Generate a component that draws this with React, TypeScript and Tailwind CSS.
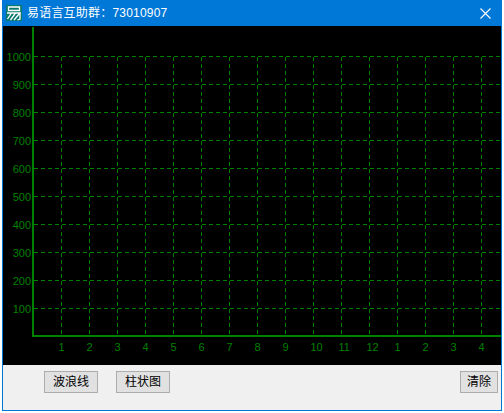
const FONT = "font-['Liberation_Sans','Noto_Sans_CJK_SC',sans-serif]";

const yValues = [1000, 900, 800, 700, 600, 500, 400, 300, 200, 100];
const xLabels = [1, 2, 3, 4, 5, 6, 7, 8, 9, 10, 11, 12, 1, 2, 3, 4];

function Chart() {
  return (
    <svg width={498} height={339} className="block" shapeRendering="crispEdges">
      {yValues.map((v, i) => {
        const y = 30.5 + i * 28;
        return (
          <g key={v}>
            <line x1={31} x2={498} y1={y} y2={y} stroke="#008000" strokeDasharray="4 3" />
            <text x={28} y={y + 4} textAnchor="end" fill="#008000" fontSize={11} fontFamily="Liberation Sans">
              {v}
            </text>
          </g>
        );
      })}
      {xLabels.map((v, i) => {
        const x = 58.5 + i * 28;
        return (
          <g key={i}>
            <line x1={x} x2={x} y1={31} y2={309} stroke="#008000" strokeDasharray="4 3" />
            {/* labels start at the tick, so 10-12 lean right */}
            <text x={x - 3} y={325} fill="#008000" fontSize={11} fontFamily="Liberation Sans">
              {v}
            </text>
          </g>
        );
      })}
      <rect x={29} y={1} width={2} height={310} fill="#008000" />
      <rect x={29} y={309} width={469} height={2} fill="#008000" />
    </svg>
  );
}

function Btn({ label, className }: { label: string; className: string }) {
  return (
    <button className={`h-[22px] bg-[#e1e1e1] border border-[#adadad] text-[12px] leading-none text-black ${className}`}>
      {label}
    </button>
  );
}

function Logo() {
  return (
    <svg width={16} height={16} viewBox="0 0 16 16" className="shrink-0">
      <rect width={16} height={16} fill="#0b7a6e" />
      <path d="M2.5 2h11v3.5h-11zM1 8h14M5.5 8L1.5 14M9.5 8L4.5 15M13.5 8.5L8 15M14 9v5l-2.5 1" stroke="#fff" strokeWidth={1.3} fill="none" />
    </svg>
  );
}

export default function App() {
  return (
    <div className={`w-[504px] h-[413px] bg-white pl-0.5 pr-0.5 pb-0.5 ${FONT}`}>
      <div className="w-[500px] h-[411px] flex flex-col border-x border-b border-[#0078d7] bg-[#f0f0f0]">
        <div className="h-[26px] shrink-0 bg-[#0078d7] flex items-center pl-[3px] pr-[10px] text-white text-[12px]">
          <Logo />
          <span className="ml-[5px] flex-1 tracking-[0.2px]">{"易语言互助群\uFF1A73010907"}</span>
          <svg width={11} height={11} viewBox="0 0 11 11" stroke="#fff" strokeWidth={1.1}>
            <path d="M0.5 0.5l10 10M10.5 0.5l-10 10" />
          </svg>
        </div>
        <div className="h-[339px] shrink-0 bg-black">
          <Chart />
        </div>
        <div className="flex-1 flex items-start pt-1.5 pl-[41px] pr-[3px]">
          <Btn label="波浪线" className="w-[54px]" />
          <Btn label="柱状图" className="w-[54px] ml-[18px]" />
          <Btn label="清除" className="w-[38px] ml-auto" />
        </div>
      </div>
    </div>
  );
}
